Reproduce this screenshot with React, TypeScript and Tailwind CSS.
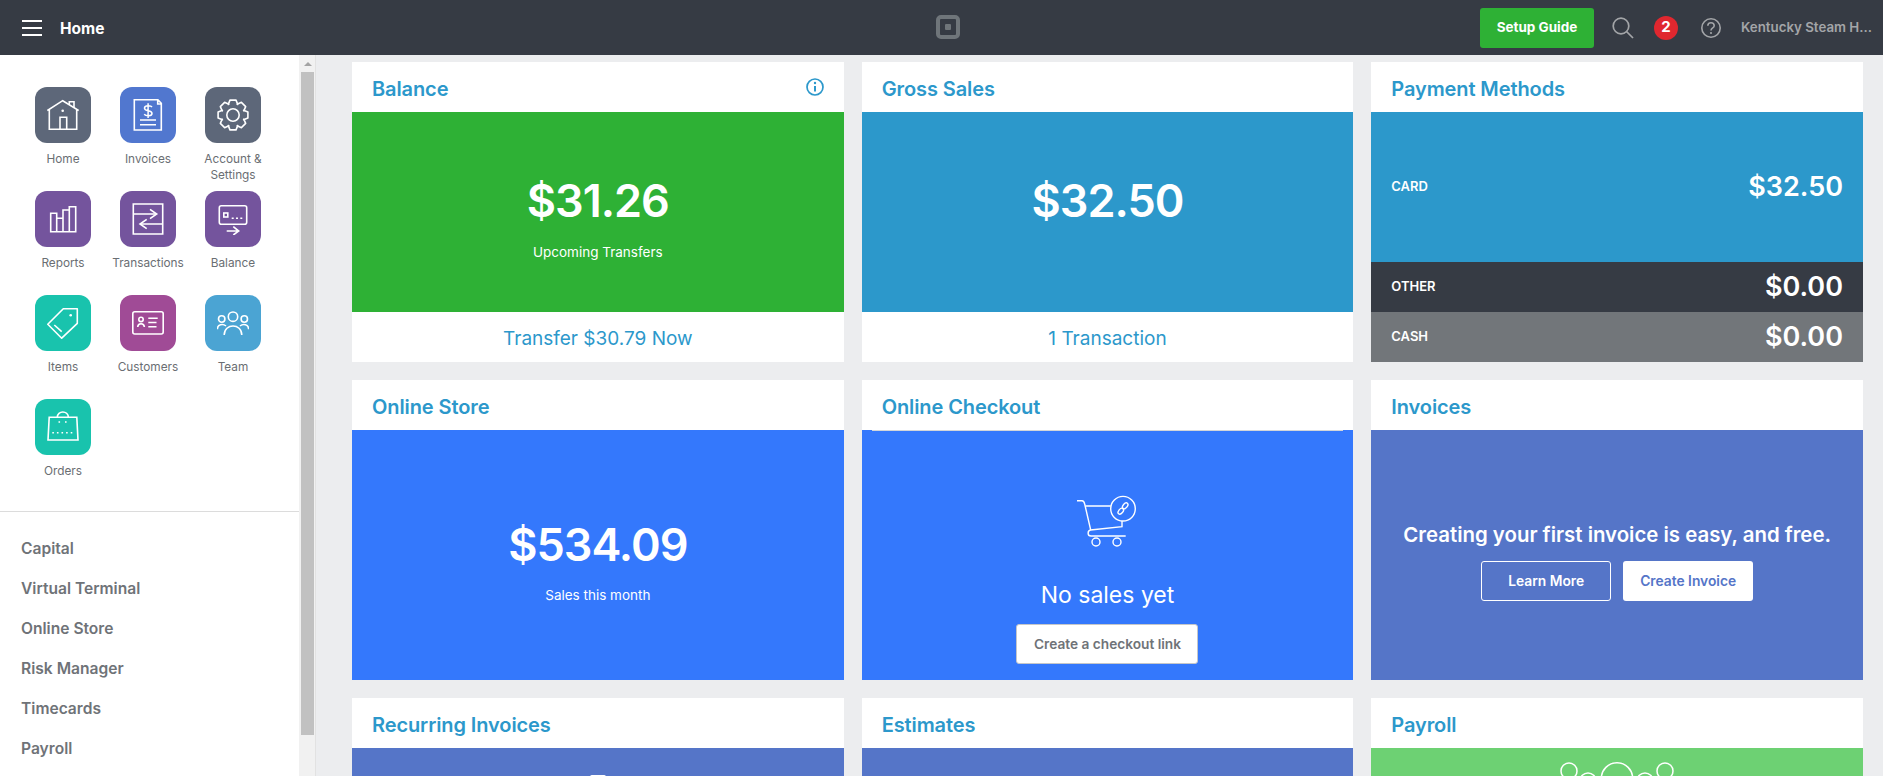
import type { ReactNode } from 'react';

const FONT = "font-['Inter','Liberation_Sans',sans-serif]";

function Ico({ children }: { children: ReactNode }) {
  return (
    <svg width="32" height="32" viewBox="0 0 32 32" fill="none" stroke="white" strokeWidth="1.6" strokeLinejoin="miter">
      {children}
    </svg>
  );
}

// 8 teeth, rounded off by the line join
function gearPath() {
  let d = '';
  for (let k = 0; k < 8; k++) {
    const a = (k * Math.PI) / 4 - Math.PI / 2;
    const pts: [number, number][] = [
      [11.6, a - 0.42],
      [15.2, a - 0.2],
      [15.2, a + 0.2],
      [11.6, a + 0.42],
    ];
    for (const [r, t] of pts) {
      d += `${d ? 'L' : 'M'}${(16 + r * Math.cos(t)).toFixed(2)} ${(16 + r * Math.sin(t)).toFixed(2)} `;
    }
  }
  return d + 'Z';
}

const apps: { label: ReactNode; bg: string; icon: ReactNode }[] = [
  {
    label: 'Home',
    bg: 'bg-[#5d6779]',
    icon: (
      <Ico>
        <path d="M0.3 11.5 L15.7 1.7 L31.7 11.5 M2.3 10.5 V30.3 H29.7 V10.5" />
        <path d="M13 30 V18.3 H19.7 V30" />
        <path d="M22.3 5.8 V2.7 H27 V9" />
        <circle cx="15.7" cy="11.7" r="1.3" fill="white" stroke="none" />
      </Ico>
    ),
  },
  {
    label: 'Invoices',
    bg: 'bg-[#5177cf]',
    icon: (
      <Ico>
        <path d="M2.3 0.6 H25.7 L29.3 4.3 V31 H2.3 Z M25.7 1 V5 H29" />
        <path d="M8 21 H24 M8 25.7 H24" />
        <path d="M20 8 C18.8 6.4 12.5 6 12.5 9.2 C12.5 12.6 20 11 20 14.4 C20 17.4 13.8 17.2 12.2 15.2 M16.1 4.2 V19" strokeWidth="1.5" />
      </Ico>
    ),
  },
  {
    label: (
      <>
        Account &<br />
        Settings
      </>
    ),
    bg: 'bg-[#5d6779]',
    icon: (
      <Ico>
        <circle cx="16" cy="16" r="6.2" />
        <path d={gearPath()} strokeLinejoin="round" />
      </Ico>
    ),
  },
  {
    label: 'Reports',
    bg: 'bg-[#74549d]',
    icon: (
      <Ico>
        <path d="M3.7 10.3 H9.7 V28.7 H3.7 Z M9.7 15.3 H16 V28.7 H9.7 Z M16 7 H22.3 V28.7 H16 Z M22.3 3.7 H28.7 V28.7 H22.3 Z" />
      </Ico>
    ),
  },
  {
    label: 'Transactions',
    bg: 'bg-[#74549d]',
    icon: (
      <Ico>
        <path d="M1.3 1 H30.7 V31 H1.3 Z M1.3 11 H24 M8.5 21 H30.7" />
        <path d="M18 6.3 L24.7 11 L18 15.7 M14.7 16.3 L8 21 L14.7 25.7" />
      </Ico>
    ),
  },
  {
    label: 'Balance',
    bg: 'bg-[#74549d]',
    icon: (
      <Ico>
        <rect x="2.3" y="2.7" width="27.4" height="18.6" rx="2" />
        <rect x="6.8" y="10" width="4" height="4" />
        <path d="M14.7 15.3 H16.7 M19 15.3 H21 M23.3 15.3 H25.3" />
        <path d="M9.7 28 H21.5 M16.3 23.7 L21.7 28 L16.3 32" />
      </Ico>
    ),
  },
  {
    label: 'Items',
    bg: 'bg-[#19c3ad]',
    icon: (
      <Ico>
        <path d="M0.8 17.3 L16.3 1.7 H30.3 V16.3 L14.7 31.2 Z" strokeLinejoin="round" />
        <circle cx="23.7" cy="8.3" r="1.3" fill="white" stroke="none" />
        <path d="M7.3 18 L14.7 24.7" />
      </Ico>
    ),
  },
  {
    label: 'Customers',
    bg: 'bg-[#a04b96]',
    icon: (
      <Ico>
        <rect x="0.8" y="4.7" width="30.4" height="22.3" rx="2" />
        <circle cx="9" cy="12.4" r="2.2" />
        <path d="M5.7 20 C6 15.6 12 15.6 12.4 20 M16.3 11.3 H25.7 M16.3 15.5 H24.5 M16.3 19.7 H24.5" />
      </Ico>
    ),
  },
  {
    label: 'Team',
    bg: 'bg-[#4ba4d3]',
    icon: (
      <Ico>
        <circle cx="16" cy="9.7" r="4.7" />
        <circle cx="4.7" cy="12" r="3.2" />
        <circle cx="27.3" cy="12" r="3.2" />
        <path d="M7.2 28 C7.2 16 24.8 16 24.8 28 M0.4 22.3 C0.4 17 6 16.5 9 19 M31.6 22.3 C31.6 17 26 16.5 23 19" />
      </Ico>
    ),
  },
  {
    label: 'Orders',
    bg: 'bg-[#19c3ad]',
    icon: (
      <Ico>
        <path d="M2.2 6.3 H29.8 L31 29 H1 Z" />
        <path d="M10.3 6.3 C10.3 -0.8 21.3 -0.8 21.3 6.3" />
        <path d="M11.5 11 H13.1 M18 11 H19.6" />
        <path d="M5.3 21.7 H27.5" strokeDasharray="1.6 3" />
      </Ico>
    ),
  },
];

const links = ['Capital', 'Virtual Terminal', 'Online Store', 'Risk Manager', 'Timecards', 'Payroll'];

function Card({ title, info, children }: { title: string; info?: boolean; children: ReactNode }) {
  return (
    <div className="h-[300px] bg-white flex flex-col">
      <div className="h-[50px] shrink-0 pl-5 pr-5 flex items-center justify-between">
        <span className="pt-[3px] text-[20px] font-semibold text-[#2c98cb] tracking-[-0.1px]">{title}</span>
        {info && (
          <svg width="18" height="18" viewBox="0 0 18 18" fill="none" stroke="#2c98cb" strokeWidth="1.7">
            <circle cx="9" cy="9" r="8" />
            <path d="M9 8 V13.5" strokeWidth="2" />
            <circle cx="9" cy="5" r="1.2" fill="#2c98cb" stroke="none" />
          </svg>
        )}
      </div>
      {children}
    </div>
  );
}

function PayRow({ label, amount, bg }: { label: string; amount: string; bg: string }) {
  return (
    <div className={`h-[50px] ${bg} pl-5 pr-5 flex items-center justify-between text-white`}>
      <span className="text-[13px] font-semibold">{label}</span>
      <span className="text-[27px] font-semibold">{amount}</span>
    </div>
  );
}

export default function App() {
  return (
    <div className={`h-[776px] overflow-hidden flex flex-col bg-[#ecedef] ${FONT}`}>
      {/* Top bar */}
      <header className="h-[55px] shrink-0 bg-[#363b44] flex items-center relative">
        <div className="ml-[22px] w-5 flex flex-col gap-[5px]">
          <span className="h-[2px] bg-white" />
          <span className="h-[2px] bg-white" />
          <span className="h-[2px] bg-white" />
        </div>
        <span className="ml-[18px] pt-[2px] text-[15.5px] font-bold text-white">Home</span>
        <div className="absolute left-[936px] top-[15px] w-6 h-6 rounded-[5px] border-[4px] border-[#6f757a] flex items-center justify-center">
          <span className="w-[6px] h-[6px] bg-[#6f757a] rounded-[1px]" />
        </div>
        <div className="ml-auto flex items-center">
          <button className="h-10 w-[114px] rounded-[3px] bg-[#2eb135] text-white text-[13.5px] font-bold">Setup Guide</button>
          <svg width="22" height="22" viewBox="0 0 22 22" fill="none" stroke="#a3a5a8" strokeWidth="1.7" className="ml-[18px]">
            <circle cx="9" cy="9" r="7.8" />
            <path d="M14.5 14.5 L21 21" />
          </svg>
          <span className="ml-[20px] w-6 h-6 rounded-full bg-[#e0272f] text-white text-[15px] font-bold flex items-center justify-center">2</span>
          <svg width="20" height="20" viewBox="0 0 20 20" fill="none" stroke="#a3a5a8" strokeWidth="1.6" className="ml-[23px]">
            <circle cx="10" cy="10" r="9.2" />
            <path d="M6.8 7.8 C6.8 3.8 13.2 3.8 13.2 7.8 C13.2 10 10 10 10 12.6" />
            <circle cx="10" cy="15" r="1.1" fill="#a3a5a8" stroke="none" />
          </svg>
          <span className="ml-[20px] mr-[11px] pt-[1px] text-[13.3px] font-semibold text-[#a3a5a8]">Kentucky Steam H...</span>
        </div>
      </header>

      <div className="flex-1 flex min-h-0">
        {/* Sidebar */}
        <aside className="w-[299px] shrink-0 bg-white">
          <div className="pt-[32px] h-[457px] border-b border-[#dcdcdc] pl-[27px]">
            <div className="grid grid-cols-[85px_85px_85px] auto-rows-[104px]">
              {apps.map((a, i) => (
                <div key={i} className="flex flex-col items-center w-[72px]">
                  <div className={`w-14 h-14 rounded-[12px] ${a.bg} flex items-center justify-center shrink-0`}>{a.icon}</div>
                  <span className="mt-[8px] text-[11.8px] leading-4 text-[#6a6e73] text-center whitespace-nowrap">{a.label}</span>
                </div>
              ))}
            </div>
          </div>
          <ul className="pt-[17px] pl-[21px]">
            {links.map((l) => (
              <li key={l} className="h-10 flex items-center text-[15.6px] font-semibold text-[#6f7378]">
                {l}
              </li>
            ))}
          </ul>
        </aside>

        {/* Scrollbar */}
        <div className="w-[17px] shrink-0 bg-[#f1f1f1] border-r border-[#e2e2e2] pl-[2px]">
          <div className="w-[13px] h-[17px] flex items-center justify-center">
            <span className="border-x-[4px] border-x-transparent border-b-[4px] border-b-[#a3a3a3]" />
          </div>
          <div className="w-[13px] h-[663px] bg-[#c1c1c1]" />
        </div>

        {/* Cards */}
        <main className="flex-1 min-w-0 overflow-hidden pt-[7px] pl-[36px] pr-[20px]">
          <div className="grid grid-cols-3 gap-[18px]">
            <Card title="Balance" info>
              <div className="flex-1 bg-[#2eb135] text-white flex flex-col items-center pt-[66px]">
                <span className="text-[45px] leading-[45px] font-semibold tracking-[-1px]">$31.26</span>
                <span className="mt-[19px] text-[13.5px] leading-5">Upcoming Transfers</span>
              </div>
              <div className="h-[50px] shrink-0 pt-[4px] flex items-center justify-center text-[19px] text-[#2c98cb]">Transfer $30.79 Now</div>
            </Card>
            <Card title="Gross Sales">
              <div className="flex-1 bg-[#2c98cb] text-white flex flex-col items-center pt-[66px]">
                <span className="text-[45px] leading-[45px] font-semibold tracking-[-1px]">$32.50</span>
              </div>
              <div className="h-[50px] shrink-0 pt-[4px] flex items-center justify-center text-[19px] text-[#2c98cb]">1 Transaction</div>
            </Card>
            <Card title="Payment Methods">
              <div className="flex-1 bg-[#2c98cb] pl-5 pr-5 flex items-center justify-between text-white">
                <span className="text-[13px] font-semibold">CARD</span>
                <span className="text-[27px] font-semibold">$32.50</span>
              </div>
              <PayRow label="OTHER" amount="$0.00" bg="bg-[#363b44]" />
              <PayRow label="CASH" amount="$0.00" bg="bg-[#72767a]" />
            </Card>

            <Card title="Online Store">
              <div className="flex-1 bg-[#3478fc] text-white flex flex-col items-center pt-[92px]">
                <span className="text-[45px] leading-[45px] font-semibold tracking-[-1px]">$534.09</span>
                <span className="mt-[18px] text-[13.5px] leading-5">Sales this month</span>
              </div>
            </Card>
            <Card title="Online Checkout">
              <div className="flex-1 bg-[#3478fc] text-white flex flex-col items-center relative">
                <span className="absolute top-0 left-[10px] right-[10px] h-px bg-[#d4d6d9]" />
                <svg width="62" height="52" viewBox="0 0 62 52" fill="none" stroke="white" strokeWidth="1.4" className="mt-[65px]">
                  <path d="M1 5.7 H6 C8 5.7 8.3 7 8.7 9 L14.7 35" />
                  <path d="M9.4 11 H34.7 M46 26 V31.7 L14.5 35 C11.5 35.5 11 41 15 41 H49.7" />
                  <circle cx="47" cy="13.7" r="12.3" />
                  <circle cx="20" cy="47" r="4" />
                  <circle cx="41" cy="47" r="4" />
                  <ellipse cx="44.8" cy="16.2" rx="3.4" ry="2.1" transform="rotate(-50 44.8 16.2)" />
                  <ellipse cx="49.2" cy="10.8" rx="3.4" ry="2.1" transform="rotate(-50 49.2 10.8)" />
                </svg>
                <span className="mt-[34px] text-[23px] leading-7">No sales yet</span>
                <button className="mt-[15px] h-10 w-[182px] bg-white rounded-[3px] border border-[#c4c6c9] text-[13.7px] font-semibold text-[#6f7378]">Create a checkout link</button>
              </div>
            </Card>
            <Card title="Invoices">
              <div className="flex-1 bg-[#5575c8] text-white flex flex-col items-center pt-[93px]">
                <span className="text-[20.4px] leading-6 font-semibold">Creating your first invoice is easy, and free.</span>
                <div className="mt-[14px] flex gap-3">
                  <button className="h-10 w-[130px] rounded-[3px] border border-white text-[13.8px] font-semibold">Learn More</button>
                  <button className="h-10 w-[130px] rounded-[3px] bg-white text-[13.8px] font-semibold text-[#5575c8]">Create Invoice</button>
                </div>
              </div>
            </Card>

            <Card title="Recurring Invoices">
              <div className="flex-1 bg-[#5575c8] flex flex-col items-center">
                <span className="mt-[27px] w-4 h-[2px] bg-white rounded-t-[2px]" />
              </div>
            </Card>
            <Card title="Estimates">
              <div className="flex-1 bg-[#5575c8]" />
            </Card>
            <Card title="Payroll">
              <div className="flex-1 bg-[#6dd173] flex justify-center">
                <svg width="120" height="60" viewBox="0 0 120 60" fill="none" stroke="white" strokeWidth="1.5" className="mt-[14px]">
                  <circle cx="60" cy="16.5" r="15.7" />
                  <circle cx="12" cy="9" r="8" />
                  <circle cx="31" cy="19" r="8" />
                  <circle cx="88" cy="19" r="8" />
                  <circle cx="108" cy="9" r="8" />
                </svg>
              </div>
            </Card>
          </div>
        </main>
      </div>
    </div>
  );
}
